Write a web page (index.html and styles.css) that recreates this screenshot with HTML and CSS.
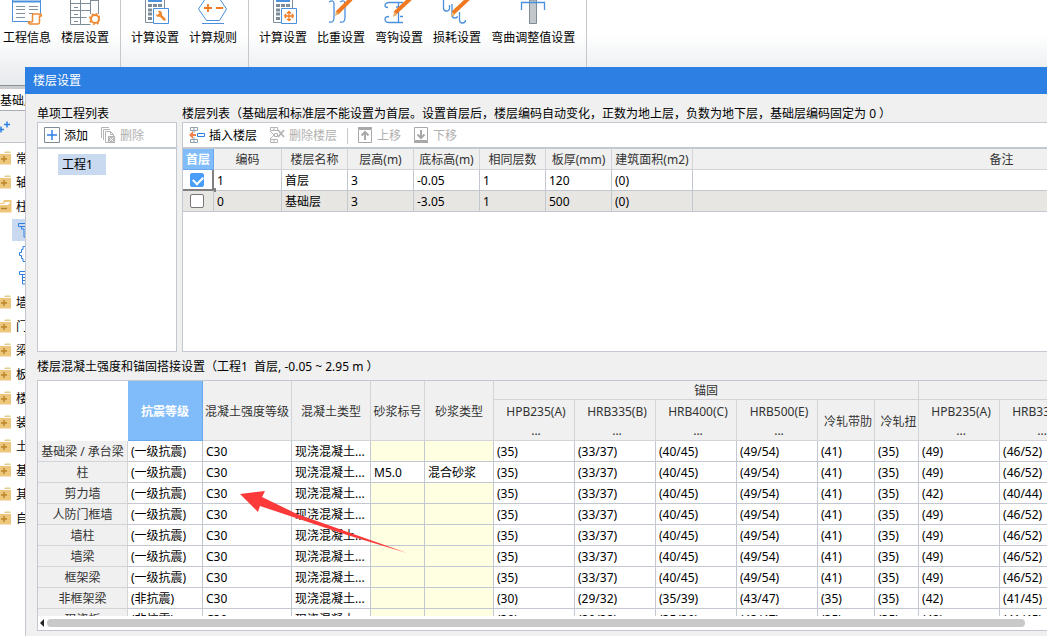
FILE: index.html
```html
<!DOCTYPE html>
<html lang="zh-CN">
<head>
<meta charset="utf-8">
<title>楼层设置</title>
<link rel="stylesheet" href="styles.css">
</head>
<body>
<svg class="defs" width="0" height="0" aria-hidden="true">
  <symbol id="folder" viewBox="0 0 12 14">
    <path d="M5 .500h5l1 1.500H4z" fill="#e8c98a"/><path d="M0 3h11v10.500H0z" fill="#edc67c"/><path d="M1 8h6M4 5v6" stroke="#b9852c" stroke-width="1.500"/>
  </symbol>
  <symbol id="calc" viewBox="0 0 30 28">
    <path d="M5.500 0v22.500h9M24.500 0v8" fill="none" stroke="#7d8c99"/><path d="M8 0h14v2H8z" fill="#4a90dc"/>
    <path d="M8 4h4v3H8zM13 4h4v3h-4zM18 4h4v3h-4zM8 8.500h4v3H8zM13 8.500h3v3h-3zM8 12.500h4v3H8zM8 17h4v3H8z" fill="#7d8c99"/>
    <path d="M13.500 8.500h15v15h-15z" fill="#fff" stroke="#4a90dc"/>
  </symbol>
</svg>
<div class="app">
  <nav class="ribbon">
    <div class="group first">
      <button class="tool"><svg viewBox="0 0 30 28"><path d="M.500 0v21.500h18M28.500 0v14" fill="none" stroke="#4a90dc"/><path d="M.500 1.500h28" stroke="#4a90dc" stroke-width="2"/><path d="M4 6.500h9M4 9.500h9M4 13.500h9M4 17.500h9M17 6.500h9M17 9.500h9M17 13.500h4" stroke="#8291a0"/><path d="M20.500 22V15q0-1 1-1h6.500q1.500 0 1.500 2h-2v6q0 2-2 2h-7.500q-1.500 0-1.500-2h4" fill="#fff" stroke="#ee8a35" stroke-width="1.500"/></svg><span>工程信息</span></button>
      <button class="tool"><svg viewBox="0 0 30 28"><path d="M.500 0v24.500h20M.500 3.500h20M.500 10.500h20M.500 17.500h16M10.500 0v24M20.500 0v14M28.500 0v14M20.500.500h8M4 7.500h4M4 14.500h4M4 21.500h4" fill="none" stroke="#7d8c99"/><circle cx="25" cy="19" r="4" fill="#fff" stroke="#ee8a35" stroke-width="2"/><circle cx="25" cy="19" r="5.300" fill="none" stroke="#ee8a35" stroke-width="1.500" stroke-dasharray="2 2.160"/></svg><span>楼层设置</span></button>
    </div>
    <div class="group">
      <button class="tool"><svg viewBox="0 0 30 28"><use href="#calc"/><path d="M19.500 14.500l5 5" stroke="#f0882f" stroke-width="2.500" stroke-linecap="round"/><path d="M18 11a3 3 0 1 1-2 3l2 1 1.500-1.500z" fill="#f0882f"/></svg><span>计算设置</span></button>
      <button class="tool"><svg viewBox="0 0 30 28"><path d="M6.500 0L.500 9 8.500 20.500h13L28.500 9 22.500 0M4 23.500h22" fill="none" stroke="#4a90dc"/><path d="M6 8h8M10 4v8M18 8h7" stroke="#f07a22" stroke-width="1.800"/></svg><span>计算规则</span></button>
    </div>
    <div class="group">
      <button class="tool"><svg viewBox="0 0 30 28"><use href="#calc"/><path d="M16.500 16h9M21 12v8M16.500 16l1.500-2M16.500 16l1.500 2M25.500 16L24 14M25.500 16L24 18M21 11.500l-2 2M21 11.500l2 2M19 19l2 1.500 2-1.500" fill="none" stroke="#f07a22" stroke-width="1.300"/></svg><span>计算设置</span></button>
      <button class="tool"><svg viewBox="0 0 30 28"><path d="M3 2q5-3 5 2v14q0 5-5 4M14 2q5-3 5 2v14q0 5-5 4" fill="none" stroke="#4a90dc" stroke-width="1.300"/><path d="M25-1L11 13" stroke="#f07a22" stroke-width="4"/><path d="M9 16l1-5 3 3z" fill="#e8b06a"/></svg><span>比重设置</span></button>
      <button class="tool"><svg viewBox="0 0 30 28"><path d="M19 2.500H5q-4 0-4 3 0 2 3 2M19 22.500H5q-4 0-4-3 0-3 4-3M14.500 2.500v20M12 7h5M16 16.500h3" fill="none" stroke="#4a90dc" stroke-width="1.300"/><path d="M27-2L11 13" stroke="#f07a22" stroke-width="4"/><path d="M9 17l1-5 3 3z" fill="#e8b06a"/></svg><span>弯钩设置</span></button>
      <button class="tool"><svg viewBox="0 0 30 28"><path d="M1.500 0v8q0 3 3 3t3-3V5M10 4v11q0 3 3 3t2-2M17.500 12v8q0 3 3 3t3-3" fill="none" stroke="#4a90dc" stroke-width="1.300"/><path d="M27-2L11 13" stroke="#f07a22" stroke-width="4"/><path d="M9 17l1-5 3 3z" fill="#e8b06a"/></svg><span>损耗设置</span></button>
      <button class="tool"><svg viewBox="0 0 30 28"><path d="M11.500 0h7v23.500h-7z" fill="#c2c7cc" stroke="#7d8c99"/><path d="M3.500 10V2.500h23V10" fill="none" stroke="#4a90dc" stroke-width="1.300"/></svg><span>弯曲调整值设置</span></button>
    </div>
  </nav>

  <aside class="sidebar">
    <div class="floor-pick">基础层</div>
    <div class="side-tools"><svg viewBox="0 0 12 14"><path d="M4 4.500h6M7 1.500v6M-2 9.500h6M1 6.500v6" stroke="#2d80e3" stroke-width="1.500"/></svg></div>
    <ul class="nav-tree">
      <li><svg><use href="#folder"/></svg>常</li>
      <li><svg><use href="#folder"/></svg>轴</li>
      <li><svg viewBox="0 0 12 14"><path d="M4 1h7.500v12.500H0V4h3z" fill="#edc67c"/><path d="M5 3h5.500L8 6H0V5h4z" fill="#fff"/><path d="M1 9.500h6" stroke="#b9852c" stroke-width="1.500"/></svg>柱</li>
      <li class="sub on"><svg viewBox="0 0 12 16"><path d="M.500 1.500H13M.500 1.500v3H13M3.500 5v2H6v8h7" fill="none" stroke="#2d80e3"/></svg></li>
      <li class="sub"><svg viewBox="0 0 12 16"><path d="M13 .500H5v3H3.500v3H1.500v3h2v3H5v3h8" fill="none" stroke="#2d80e3"/></svg></li>
      <li class="sub"><svg viewBox="0 0 12 16"><path d="M1.500 1.500H13M1.500 1.500v3H13M4.500 5v9H13M5 7.500h8M5 10.500h8" fill="none" stroke="#2d80e3"/></svg></li>
      <li><svg><use href="#folder"/></svg>墙</li>
      <li><svg><use href="#folder"/></svg>门</li>
      <li><svg><use href="#folder"/></svg>梁</li>
      <li><svg><use href="#folder"/></svg>板</li>
      <li><svg><use href="#folder"/></svg>楼</li>
      <li><svg><use href="#folder"/></svg>装</li>
      <li><svg><use href="#folder"/></svg>土</li>
      <li><svg><use href="#folder"/></svg>基</li>
      <li><svg><use href="#folder"/></svg>其</li>
      <li><svg><use href="#folder"/></svg>自</li>
    </ul>
  </aside>

  <section class="dialog" role="dialog" aria-labelledby="dlg-title">
    <h1 class="title" id="dlg-title">楼层设置</h1>
    <div class="content">
      <div class="upper">
        <div class="projects">
          <h2>单项工程列表</h2>
          <div class="panel">
            <div class="toolbar">
              <button><svg viewBox="0 0 16 16"><path d="M.500.500h15v15H.500z" fill="#fff" stroke="#7d8c99"/><path d="M3 8h10M8 3v10" stroke="#2d80e3" stroke-width="1.500"/></svg>添加</button>
              <button disabled><svg viewBox="0 0 16 16"><path d="M1.500 11V.500H9M3.500 13V2.500H10M8 15.500H5.500v-11h5l3 3V9M10.500 4.500v3h3" fill="none" stroke="#b4b4b4"/><path d="M8 9h7v7H8z" fill="#b4b4b4"/><path d="M9.500 10.500l4 4M13.500 10.500l-4 4" stroke="#fff"/></svg>删除</button>
            </div>
            <div class="project-item">工程1</div>
          </div>
        </div>
        <div class="floors">
          <h2>楼层列表（基础层和标准层不能设置为首层。设置首层后，楼层编码自动变化，正数为地上层，负数为地下层，基础层编码固定为 0 ）</h2>
          <div class="panel">
            <div class="toolbar">
              <button><svg viewBox="0 0 16 16"><path d="M1.500.500h7v3h-7zM5 .500v3M1.500 12.500h7v3h-7zM5 12.500v3M5 4v2M5 10v2" fill="none" stroke="#93a0ab"/><path d="M8.500 6.500h7v3h-7z" fill="#fff" stroke="#2d80e3"/><path d="M0 8l4-4v3h3v2H4v3z" fill="#f0814a"/></svg>插入楼层</button>
              <button disabled><svg viewBox="0 0 16 16"><path d="M1.500.500h7v3h-7zM5 .500v3M1.500 12.500h7v3h-7zM5 12.500v3M1 4l4 4-4 4M5.500 6.500h3v3h-3z" fill="none" stroke="#b4b4b4"/><path d="M9 3l6 7M15 3L9 10" stroke="#b4b4b4" stroke-width="1.800"/></svg>删除楼层</button>
              <i class="divider"></i>
              <button disabled><svg viewBox="0 0 16 16"><path d="M1.500 2.500h13v13h-13z" fill="none" stroke="#a8a8a8"/><path d="M1 0h14v2H1z" fill="#a8a8a8"/><path d="M8 13V6M4.500 8.500L8 5l3.500 3.500" fill="none" stroke="#a8a8a8" stroke-width="2"/></svg>上移</button>
              <button disabled><svg viewBox="0 0 16 16"><path d="M1.500.500h13v13h-13z" fill="none" stroke="#a8a8a8"/><path d="M1 14h14v2H1z" fill="#a8a8a8"/><path d="M8 3v7M4.500 7.500L8 11l3.500-3.500" fill="none" stroke="#a8a8a8" stroke-width="2"/></svg>下移</button>
            </div>
            <table class="grid floor-grid">
              <colgroup><col class="w31"><col class="w68"><col class="w66"><col class="w66"><col class="w66"><col class="w66"><col class="w66"><col class="w81"><col class="w618"></colgroup>
              <thead><tr><th class="active">首层</th><th>编码</th><th>楼层名称</th><th>层高(m)</th><th>底标高(m)</th><th>相同层数</th><th>板厚(mm)</th><th>建筑面积(m2)</th><th>备注</th></tr></thead>
              <tbody>
                <tr><td class="pick current"><input type="checkbox" aria-label="首层 1" checked></td><td>1</td><td>首层</td><td>3</td><td>-0.05</td><td>1</td><td>120</td><td>(0)</td><td></td></tr>
                <tr class="alt"><td class="pick"><input type="checkbox" aria-label="首层 0"></td><td>0</td><td>基础层</td><td>3</td><td>-3.05</td><td>1</td><td>500</td><td>(0)</td><td></td></tr>
              </tbody>
            </table>
          </div>
        </div>
      </div>

      <h2 class="lower-title">楼层混凝土强度和锚固搭接设置（工程1&nbsp; 首层, -0.05 ~ 2.95 m ）</h2>
      <div class="panel strength">
        <div class="viewport">
          <table class="grid strength-grid">
            <colgroup><col class="w90"><col class="w75"><col class="w89"><col class="w79"><col class="w54"><col class="w69"><col class="w81"><col class="w81"><col class="w81"><col class="w81"><col class="w57"><col class="w44"><col class="w81"><col class="w81"></colgroup>
            <thead>
              <tr class="band"><th rowspan="2" class="corner"></th><th rowspan="2" class="active">抗震等级</th><th rowspan="2">混凝土强度等级</th><th rowspan="2">混凝土类型</th><th rowspan="2">砂浆标号</th><th rowspan="2">砂浆类型</th><th colspan="6">锚固</th><th colspan="2"></th></tr>
              <tr class="bars"><th>HPB235(A)<br>...</th><th>HRB335(B)<br>...</th><th>HRB400(C)<br>...</th><th>HRB500(E)<br>...</th><th>冷轧带肋</th><th>冷轧扭</th><th>HPB235(A)<br>...</th><th>HRB335(B)<br>...</th></tr>
            </thead>
            <tbody>
              <tr><th>基础梁 / 承台梁</th><td>(一级抗震)</td><td>C30</td><td>现浇混凝土...</td><td class="na"></td><td class="na"></td><td>(35)</td><td>(33/37)</td><td>(40/45)</td><td>(49/54)</td><td>(41)</td><td>(35)</td><td>(49)</td><td>(46/52)</td></tr>
              <tr><th>柱</th><td>(一级抗震)</td><td>C30</td><td>现浇混凝土...</td><td>M5.0</td><td>混合砂浆</td><td>(35)</td><td>(33/37)</td><td>(40/45)</td><td>(49/54)</td><td>(41)</td><td>(35)</td><td>(49)</td><td>(46/52)</td></tr>
              <tr><th>剪力墙</th><td>(一级抗震)</td><td>C30</td><td>现浇混凝土...</td><td class="na"></td><td class="na"></td><td>(35)</td><td>(33/37)</td><td>(40/45)</td><td>(49/54)</td><td>(41)</td><td>(35)</td><td>(42)</td><td>(40/44)</td></tr>
              <tr><th>人防门框墙</th><td>(一级抗震)</td><td>C30</td><td>现浇混凝土...</td><td class="na"></td><td class="na"></td><td>(35)</td><td>(33/37)</td><td>(40/45)</td><td>(49/54)</td><td>(41)</td><td>(35)</td><td>(49)</td><td>(46/52)</td></tr>
              <tr><th>墙柱</th><td>(一级抗震)</td><td>C30</td><td>现浇混凝土...</td><td class="na"></td><td class="na"></td><td>(35)</td><td>(33/37)</td><td>(40/45)</td><td>(49/54)</td><td>(41)</td><td>(35)</td><td>(49)</td><td>(46/52)</td></tr>
              <tr><th>墙梁</th><td>(一级抗震)</td><td>C30</td><td>现浇混凝土...</td><td class="na"></td><td class="na"></td><td>(35)</td><td>(33/37)</td><td>(40/45)</td><td>(49/54)</td><td>(41)</td><td>(35)</td><td>(49)</td><td>(46/52)</td></tr>
              <tr><th>框架梁</th><td>(一级抗震)</td><td>C30</td><td>现浇混凝土...</td><td class="na"></td><td class="na"></td><td>(35)</td><td>(33/37)</td><td>(40/45)</td><td>(49/54)</td><td>(41)</td><td>(35)</td><td>(49)</td><td>(46/52)</td></tr>
              <tr><th>非框架梁</th><td>(非抗震)</td><td>C30</td><td>现浇混凝土...</td><td class="na"></td><td class="na"></td><td>(30)</td><td>(29/32)</td><td>(35/39)</td><td>(43/47)</td><td>(35)</td><td>(35)</td><td>(42)</td><td>(41/45)</td></tr>
              <tr><th>现浇板</th><td>(非抗震)</td><td>C30</td><td>现浇混凝土...</td><td class="na"></td><td class="na"></td><td>(30)</td><td>(29/32)</td><td>(35/39)</td><td>(43/47)</td><td>(35)</td><td>(35)</td><td>(42)</td><td>(41/45)</td></tr>
            </tbody>
          </table>
        </div>
        <div class="scrollbar"><i class="arrow-left"></i><i class="thumb"></i></div>
      </div>
    </div>
    <svg class="pointer" viewBox="0 0 168 64" aria-hidden="true"><path d="M0 4L25 1l-3 6 35 17 110 39-60-18L20 16l-2 6z" fill="#fb3a39"/></svg>
  </section>
</div>
</body>
</html>
```
FILE: styles.css
```css
* { box-sizing: border-box; }
html, body { height: 100%; margin: 0; }
body {
  overflow: hidden;
  font: 12px/18px "Noto Sans", "Noto Sans CJK SC", sans-serif;
  color: #000;
  background: #fff;
}
h1, h2 { margin: 0; font-size: 12px; font-weight: 400; white-space: nowrap; }
h2 { padding-top: 2px; line-height: 16px; }
button { border: 0; padding: 0; background: none; font: inherit; color: inherit; white-space: nowrap; }
svg { display: block; flex: none; }
.defs { position: absolute; }
.app { position: relative; height: 100%; display: flex; flex-direction: column; overflow: hidden; }

/* ribbon */
.ribbon {
  display: flex;
  flex: none;
  height: 86px;
  background: linear-gradient(#fff 40%, #e6e9ec);
  border-bottom: 1px solid #8c9197;
}
.group { display: flex; align-items: flex-start; gap: 10px; padding: 0 11px 0 10px; border-right: 1px solid #c6c9cc; }
.group.first { padding-left: 3px; }
.tool { display: flex; flex-direction: column; align-items: center; gap: 1px; }
.tool svg { width: 30px; height: 28px; }

/* side navigation */
.sidebar { flex: 1; width: 200px; padding-top: 3px; background: #c9cbcf; display: flex; flex-direction: column; }
.floor-pick { height: 22px; padding-top: 2px; line-height: 20px; background: #fff; border-bottom: 1px solid #a9adb3; }
.side-tools { height: 32px; padding-top: 9px; background: #f0f0f0; border-bottom: 1px solid #c0c4ca; }
.side-tools svg { width: 12px; height: 14px; }
.nav-tree { flex: 1; margin: 0; padding: 3px 0 0; list-style: none; background: #fff; }
.nav-tree li { display: flex; align-items: flex-start; height: 24px; gap: 4px; padding-top: 4px; }
.nav-tree svg { width: 12px; height: 14px; margin-top: 1px; }
.nav-tree .sub { margin-left: 12px; padding-left: 6px; padding-top: 3px; }
.nav-tree .sub svg { height: 16px; }
.nav-tree .on { height: 22px; padding-top: 2px; margin-top: 1px; margin-bottom: 1px; background: #c8d9f0; }

/* dialog */
.dialog {
  position: absolute;
  top: 67px;
  right: 0;
  bottom: 0;
  left: 25px;
  display: flex;
  flex-direction: column;
  background: #f0f0f0;
}
.title { flex: none; padding: 0 8px; line-height: 27px; color: #fff; background: #2d80e3; }
.content {
  flex: 1;
  min-height: 0;
  display: flex;
  flex-direction: column;
  padding: 10px 0 5px 11px;
  border-left: 1px solid #c3c7cf;
  overflow: hidden;
}
.upper { flex: none; display: flex; gap: 5px; height: 248px; }
.projects, .floors { display: flex; flex-direction: column; min-width: 0; }
.projects { width: 140px; flex: none; }
.floors { flex: 1; }
.panel { flex: 1; min-height: 0; background: #fff; border: 1px solid #c3c7cf; overflow: hidden; }
.floors .panel, .strength { border-right: 0; }
.toolbar { display: flex; align-items: center; gap: 12px; height: 26px; padding: 2px 6px 0; border-bottom: 2px solid #c3c7cf; }
.toolbar button { display: flex; align-items: flex-start; gap: 4px; }
.toolbar svg { width: 16px; height: 16px; }
.toolbar button:disabled { color: #b0b0b0; }
.divider { width: 1px; height: 16px; margin: 0 -3px 0 -2px; background: #c8c8c8; }
.project-item { width: 48px; margin: 5px 0 0 20px; padding-left: 4px; line-height: 21px; background: #c8d9f0; }
.lower-title { flex: none; padding: 7px 0 5px; }

/* grids */
.grid { table-layout: fixed; border-collapse: separate; border-spacing: 0; width: 0; }
.grid th, .grid td { height: 21px; padding: 2px 0 0 3px; line-height: 18px; border: 0 solid #c3c7cf; border-width: 0 1px 1px 0; white-space: nowrap; overflow: hidden; text-align: left; }
.grid th { padding: 2px 0 0; font-weight: 400; color: #333; text-align: center; background: #f0f0f0; border-color: #d2d4d8; }
.grid .active { font-weight: 700; color: #fff; background: #80bbfa; border-color: #6aa8ec; }
.grid .alt td { background: #e8e6e2; }
.grid td.na { background: #ffffe1; }
.grid .corner { background: #fff; border-color: #fff; }
.grid .pick { position: relative; z-index: 1; padding: 0 0 0 7px; overflow: visible; }
.pick input {
  appearance: none;
  position: relative;
  display: block;
  width: 14px;
  height: 14px;
  margin: 0;
  border: 1px solid #777;
  border-radius: 2px;
  background: #fff;
}
.pick input:checked { background: #4a9df8; border-color: #4a9df8; }
.pick input:checked::after {
  content: "";
  position: absolute;
  top: 2px;
  left: 2px;
  width: 8px;
  height: 5px;
  border: solid #fff;
  border-width: 0 0 2px 2px;
  transform: rotate(-45deg);
}
.grid .current { border: 2px solid #808080; border-top: 0; border-left: 0; }
.current::after { content: ""; position: absolute; right: -4px; bottom: -3px; width: 4px; height: 4px; background: #808080; }
.strength { display: flex; flex-direction: column; }
.viewport { flex: 1; min-height: 0; overflow: hidden; }
.strength-grid .band th { height: 19px; padding-top: 1px; line-height: 17px; }
.strength-grid .band th[rowspan] { padding-top: 2px; }
.strength-grid .bars th { height: 41px; padding: 2px 0 0 4px; line-height: 19px; }
.w31 { width: 31px; }
.w44 { width: 44px; }
.w54 { width: 54px; }
.w57 { width: 57px; }
.w66 { width: 66px; }
.w68 { width: 68px; }
.w69 { width: 69px; }
.w75 { width: 75px; }
.w79 { width: 79px; }
.w81 { width: 81px; }
.w89 { width: 89px; }
.w90 { width: 90px; }
.w618 { width: 618px; }

.scrollbar { flex: none; display: flex; align-items: center; gap: 3px; height: 14px; padding: 0 22px 0 2px; }
.arrow-left { border: solid transparent; border-width: 4px 4px 4px 0; border-right-color: #222; }
.thumb { flex: 1; height: 8px; border-radius: 4px; background: #c9c9c9; }

.pointer { position: absolute; left: 215px; top: 423px; width: 168px; height: 64px; }
```
